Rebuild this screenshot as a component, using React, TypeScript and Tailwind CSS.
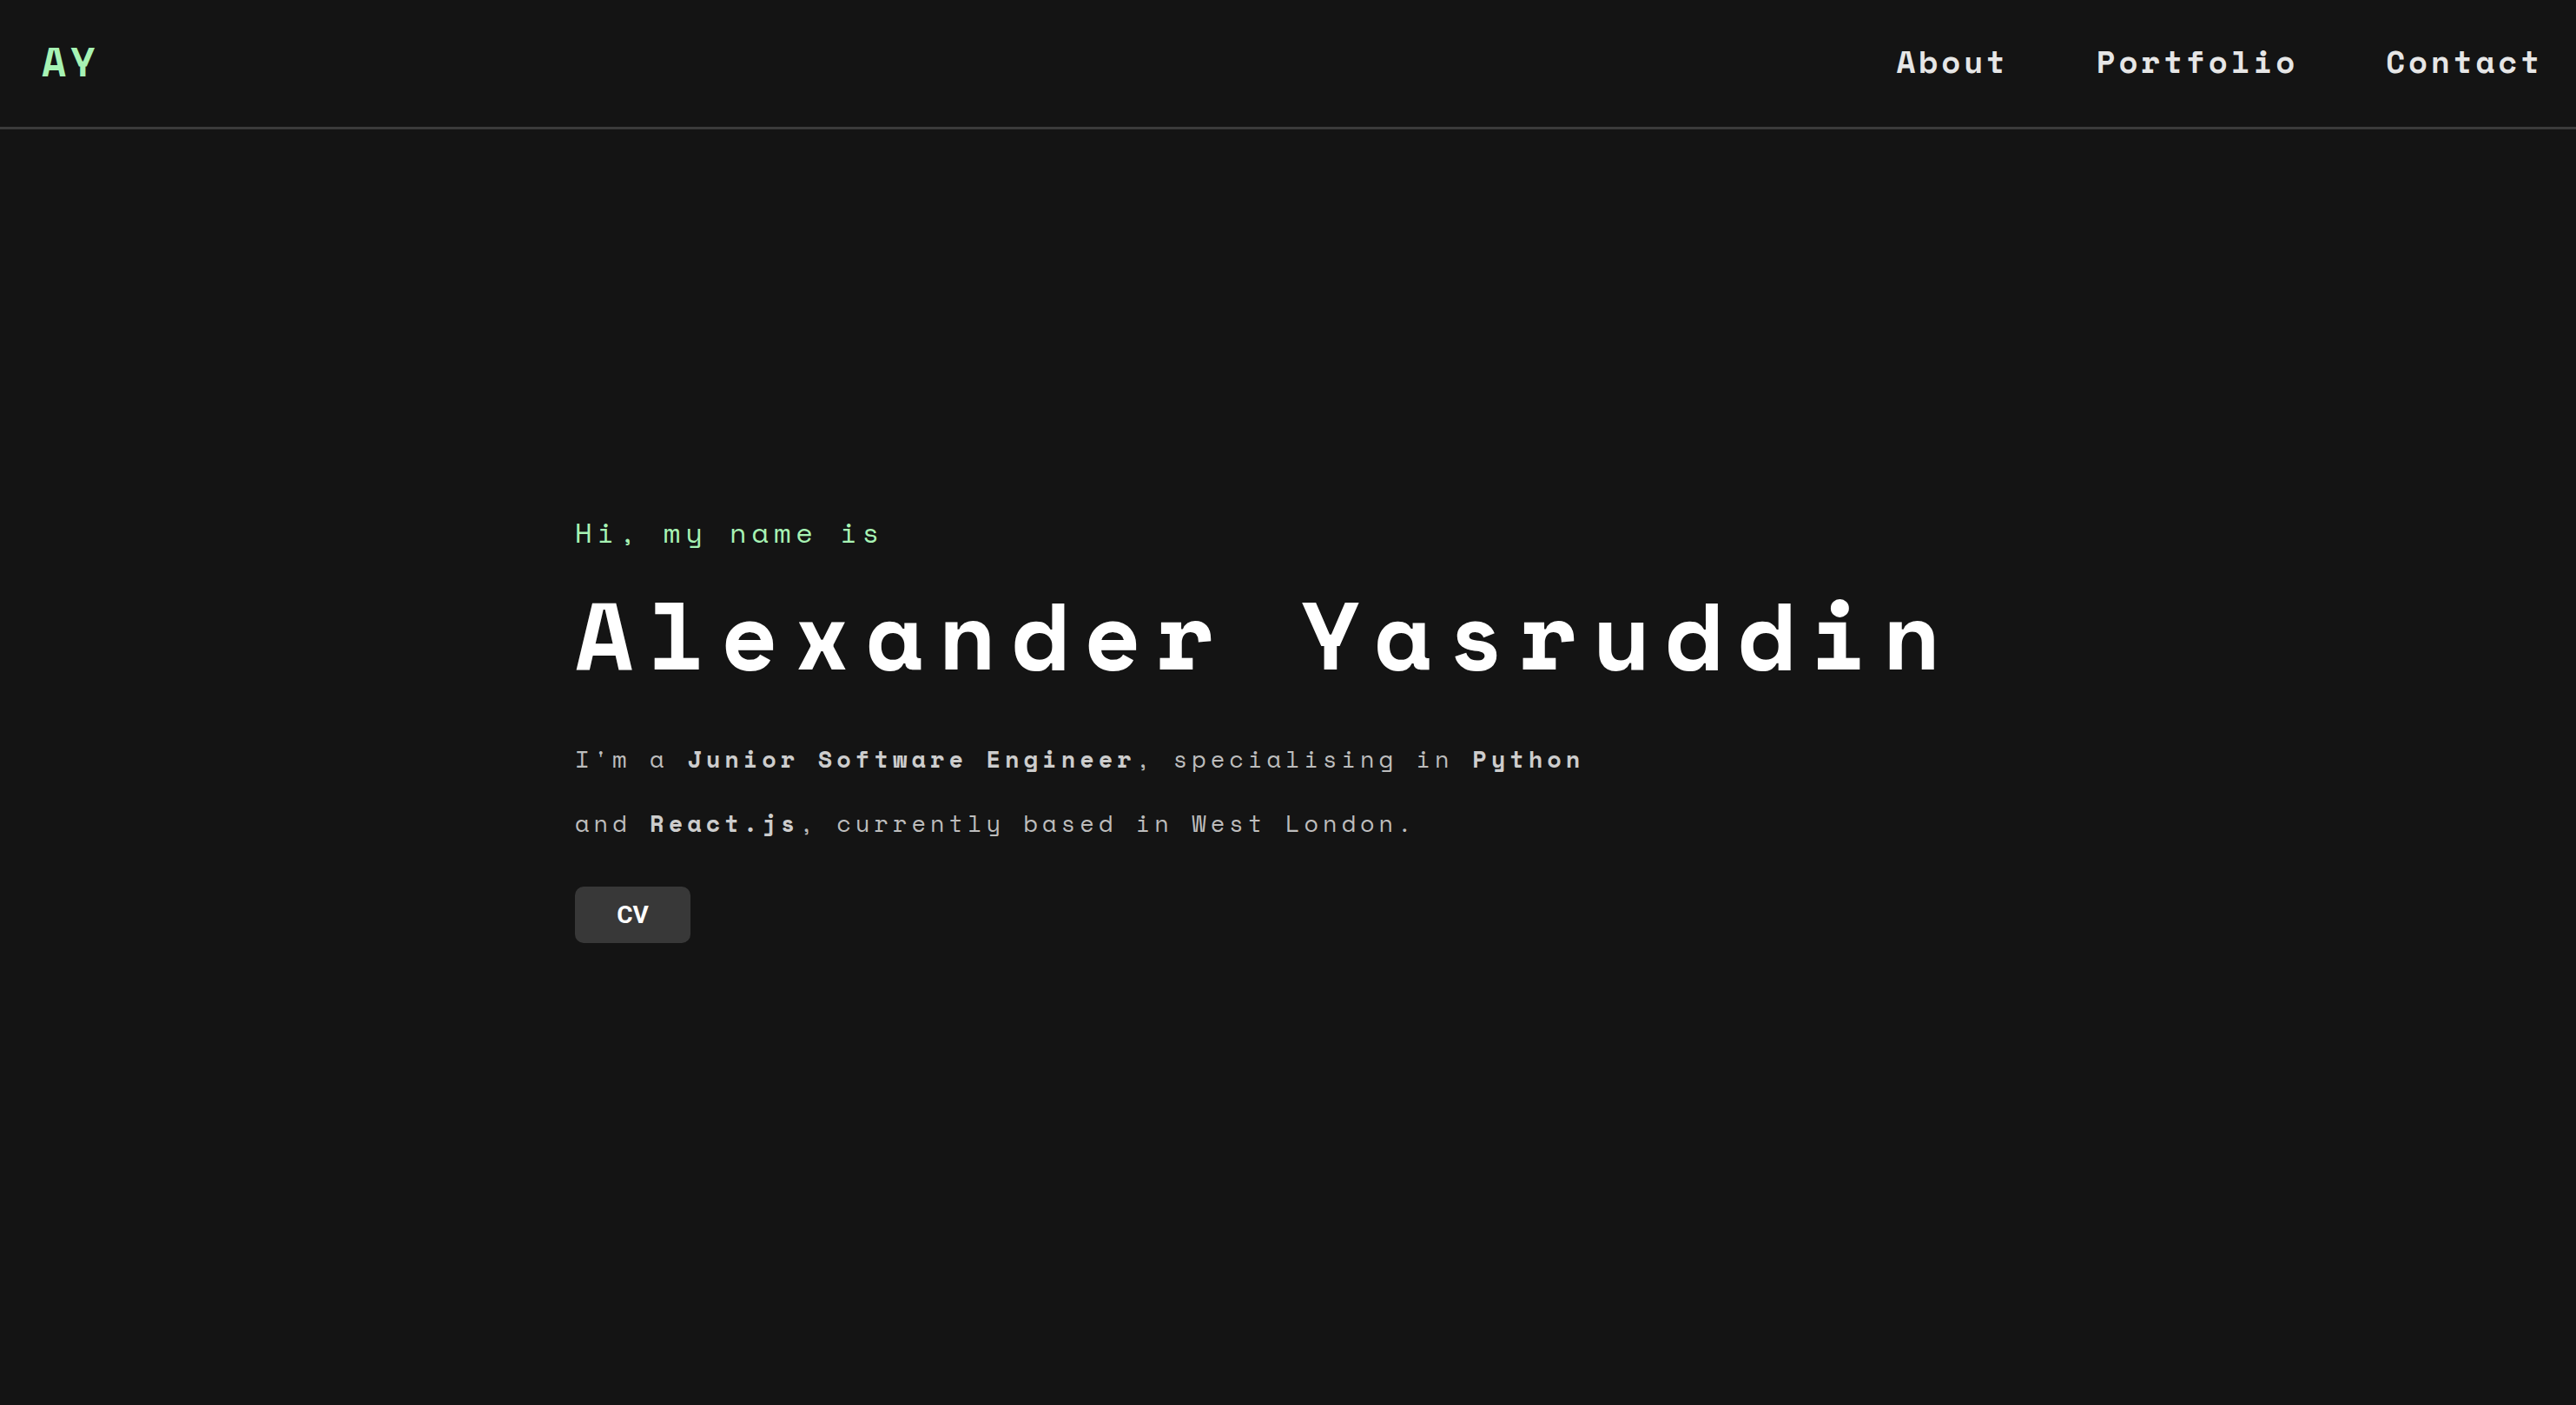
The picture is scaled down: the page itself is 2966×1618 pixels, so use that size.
import React from 'react';

const MONO = { fontFamily: '"Space Mono", "DejaVu Sans Mono", "Liberation Mono", monospace' };

const NAV_LINKS = ['About', 'Portfolio', 'Contact'];

const Header: React.FC = () => (
  <header className="flex h-[149px] items-center justify-between border-b-[3px] border-[#3b3b3b] pb-1 pl-12 pr-[38px]">
    <a href="#" className="text-[46px] font-bold leading-none tracking-[5px] text-[#a7f3b4]">
      AY
    </a>
    <nav className="flex items-center gap-[101px]">
      {NAV_LINKS.map(link => (
        <a key={link} href="#" className="text-[36px] font-bold leading-none tracking-[3.8px] text-[#e6e6e6]">
          {link}
        </a>
      ))}
    </nav>
  </header>
);

const Hero: React.FC = () => (
  <section className="mx-auto w-[1642px] pt-[444px]">
    <p className="text-[32px] leading-[40px] tracking-[5.85px] text-[#a7f3b4]">Hi, my name is</p>
    <h1 className="mt-[31px] text-[110px] font-bold leading-[132px] tracking-[16.3px] text-white">
      Alexander Yasruddin
    </h1>
    {/* intro paragraph, wraps after "Python" */}
    <p className="mt-[41px] w-[1200px] text-[27px] leading-[74px] tracking-[5px] text-[#bdbdbd]">
      I'm a <b className="font-bold text-[#cdcdcd]">Junior Software Engineer</b>, specialising in{' '}
      <b className="font-bold text-[#cdcdcd]">Python</b> and <b className="font-bold text-[#cdcdcd]">React.js</b>,
      currently based in West London.
    </p>
    <button
      className="mt-[36px] flex h-[65px] w-[133px] items-center justify-center rounded-[10px] bg-[#383838] text-[28px] font-bold text-white"
      style={{ fontFamily: 'Roboto, "Liberation Sans", sans-serif' }}
    >
      CV
    </button>
  </section>
);

export default function App() {
  return (
    <div className="min-h-screen bg-[#141414]" style={MONO}>
      <Header />
      <Hero />
    </div>
  );
}
